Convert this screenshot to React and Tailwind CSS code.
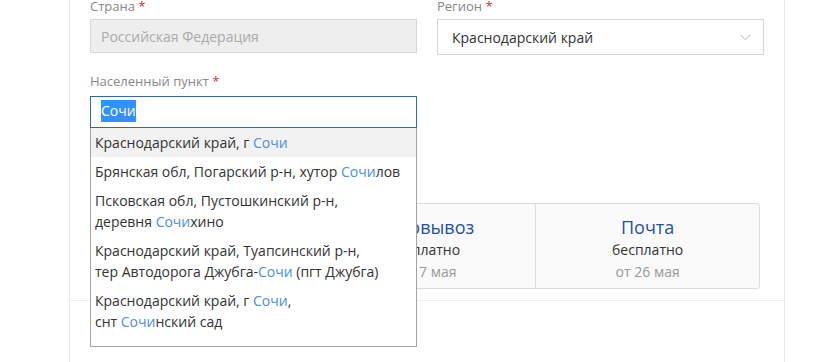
import React from "react";

const options = [
  [["Краснодарский край, г ", false], ["Сочи", true]],
  [["Брянская обл, Погарский р-н, хутор ", false], ["Сочи", true], ["лов", false]],
  [["Псковская обл, Пустошкинский р-н,", false], ["\n", false], ["деревня ", false], ["Сочи", true], ["хино", false]],
  [["Краснодарский край, Туапсинский р-н,", false], ["\n", false], ["тер Автодорога Джубга-", false], ["Сочи", true], [" (пгт Джубга)", false]],
  [["Краснодарский край, г ", false], ["Сочи", true], [",", false], ["\n", false], ["снт ", false], ["Сочи", true], ["нский сад", false]],
];

const cards = [
  { title: "Курьер", price: "бесплатно", date: "от 16 мая" },
  { title: "Самовывоз", price: "бесплатно", date: "от 17 мая" },
  { title: "Почта", price: "бесплатно", date: "от 26 мая" },
];

function Label({ children }) {
  return (
    <div className="text-[13px] leading-[13px] text-[#888]">
      {children} <span className="text-[#c9302c]">*</span>
    </div>
  );
}

export default function App() {
  return (
    <div className="w-[813px] h-[362px] overflow-hidden bg-white font-['Open_Sans',sans-serif] text-[#333]">
      <div className="ml-[69px] w-[716px] h-full border-x border-[#e8e8e8]">
        <div className="px-[20px]">
          <div className="grid grid-cols-2 gap-x-[20px]">
            <div>
              <Label>Страна</Label>
              <div className="mt-[6px] h-[34px] border border-[#d6d6d6] bg-[#eeeeee] px-[10px] flex items-center text-[14px] text-[#aaa]">
                Российская Федерация
              </div>
            </div>
            <div>
              <Label>Регион</Label>
              <div className="mt-[6px] h-[36px] border border-[#d6d6d6] bg-white pl-[14px] pr-[12px] flex items-center justify-between text-[14px] text-[#333]">
                <span>Краснодарский край</span>
                <svg width="11" height="7" viewBox="0 0 11 7" fill="none">
                  <path d="M0.5 0.8L5.5 5.8L10.5 0.8" stroke="#b5b5b5" strokeWidth="1" />
                </svg>
              </div>
            </div>
          </div>

          <div className="mt-[20px] grid grid-cols-2 gap-x-[20px]">
            <div className="relative z-10">
              <Label>Населенный пункт</Label>
              <div className="mt-[8px] h-[32px] border border-[#2f6aa8] bg-white px-[10px] pb-[3px] flex items-center text-[14px]">
                <span className="bg-[#3390ff] text-white leading-[22px]">Сочи</span>
              </div>
              <div className="absolute left-0 right-0 top-full border border-t-0 border-[#a3a3a3] bg-white pb-[10px] text-[14px] leading-[21px] text-[#333]">
                {options.map((opt, i) => (
                  <div key={i} className={`px-[4px] py-[4px] whitespace-pre-line ${i === 0 ? "bg-[#f2f2f2]" : ""}`}>
                    {opt.map(([t, hl], j) =>
                      hl ? (
                        <span key={j} className="text-[#4a8fdd]">{t}</span>
                      ) : (
                        <span key={j}>{t}</span>
                      )
                    )}
                  </div>
                ))}
              </div>
            </div>
            <div />
          </div>

          <div className="mt-[75px] w-[670px] grid grid-cols-3 border border-[#dcdcdc] rounded-[3px] bg-[#fafafa] divide-x divide-[#dcdcdc]">
            {cards.map((c) => (
              <div key={c.title} className="pt-[11px] pb-[5px] text-center">
                <div className="text-[18px] leading-[24px] text-[#24519f]">{c.title}</div>
                <div className="text-[14px] leading-[22px] text-[#333]">{c.price}</div>
                <div className="text-[14px] leading-[22px] text-[#999]">{c.date}</div>
              </div>
            ))}
          </div>
        </div>
        <div className="mt-[11px] border-t border-[#ececec]" />
      </div>
    </div>
  );
}
